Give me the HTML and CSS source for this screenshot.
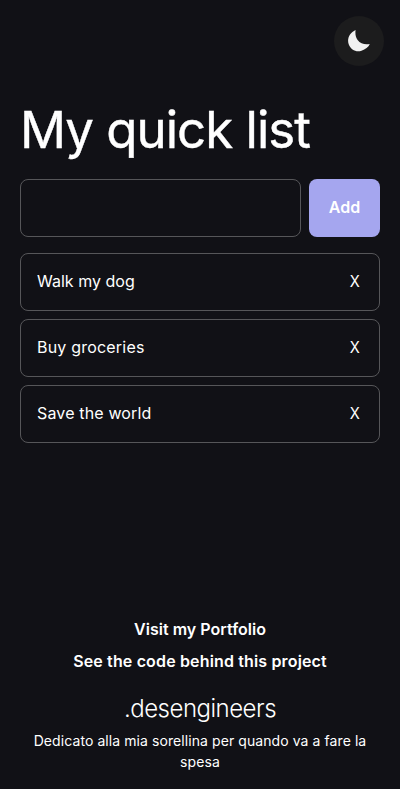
FILE: index.html
```html
<!DOCTYPE html>
<html lang="en">
<head>
<meta charset="utf-8">
<meta name="viewport" content="width=device-width, initial-scale=1">
<title>My quick list</title>
<link rel="stylesheet" href="styles.css">
</head>
<body>
<header class="topbar">
  <button class="theme-toggle" aria-label="Toggle theme">
    <svg class="moon" viewBox="0 0 22 22"><path d="M7.600 0C1.400 2.800-1.300 9.100.8 14.500c2 5.400 7.500 8 12.700 6.200 3.800-1.300 7-3.800 8.300-6.800-4.700 1.100-9.400-.3-12.200-4C7.500 7.100 7.100 3.500 7.600 0z"/></svg>
  </button>
</header>
<main class="content">
  <h1 class="title">My quick list</h1>
  <form class="entry">
    <input class="field" type="text" aria-label="New item">
    <button class="add" type="button">Add</button>
  </form>
  <ul class="list">
    <li class="item"><span class="walk">Walk my dog</span><span class="remove">X</span></li>
    <li class="item"><span class="buy">Buy groceries</span><span class="remove">X</span></li>
    <li class="item"><span class="save">Save the world</span><span class="remove">X</span></li>
  </ul>
</main>
<footer class="footer">
  <a class="link portfolio">Visit my Portfolio</a>
  <a class="link code">See the code behind this project</a>
  <div class="brand">.desengineers</div>
  <p class="dedication">Dedicato alla mia sorellina per quando va a fare la spesa</p>
</footer>
</body>
</html>
```
FILE: styles.css
```css
* { box-sizing: border-box; }
body {
  margin: 0;
  height: 789px;
  display: flex;
  flex-direction: column;
  overflow: hidden;
  background: #111116;
  color: #fff;
  font: 16px/24px Inter, sans-serif;
}
.topbar {
  display: flex;
  justify-content: flex-end;
  padding: 16px 16px 0;
}
.theme-toggle {
  width: 50px;
  height: 50px;
  padding: 0;
  border: 0;
  border-radius: 50%;
  background: #1c1c1d;
  display: grid;
  place-items: center;
}
.moon { width: 22px; height: 22px; fill: #f1f1f1; }
.content { padding: 32px 20px 0; }
.title {
  margin: 0 0 17px;
  font-size: 51px;
  line-height: 64px;
  font-weight: 400;
  letter-spacing: -1px;
  -webkit-text-stroke: 0.4px #fff;
  white-space: nowrap;
}
.entry { display: flex; gap: 8px; margin-bottom: 16px; }
.field {
  flex: 1;
  min-width: 0;
  height: 58px;
  padding: 16px;
  border: 1px solid #565659;
  border-radius: 8px;
  background: transparent;
  color: #fff;
  font: inherit;
}
.add {
  width: 71px;
  height: 58px;
  padding: 0 0 2px;
  border: 0;
  border-radius: 8px;
  background: #a5a6ef;
  color: #fff;
  font: 600 16px/24px Inter, sans-serif;
}
.list {
  margin: 0;
  padding: 0;
  list-style: none;
  display: grid;
  gap: 8px;
}
.item {
  height: 58px;
  padding: 0 19px 2px 16px;
  display: flex;
  align-items: center;
  justify-content: space-between;
  border: 1px solid #565659;
  border-radius: 8px;
}
.walk { letter-spacing: 0.02px; }
.buy { letter-spacing: 0.2px; }
.save { letter-spacing: 0.15px; }
.remove { font-size: 16px; transform: scaleX(0.92); transform-origin: right; }
.footer {
  margin-top: auto;
  padding: 0 20px 17px;
  display: flex;
  flex-direction: column;
  align-items: center;
  text-align: center;
}
.link { font-weight: 600; margin-bottom: 8px; white-space: nowrap; }
.portfolio { letter-spacing: 0.02px; }
.code { letter-spacing: 0.15px; }
.brand {
  margin: 14px 0 7px;
  font: 300 24px/28px Inter, sans-serif;
  letter-spacing: -0.5px;
}
.dedication {
  margin: 0;
  font-size: 14px;
  line-height: 21px;
  letter-spacing: 0.08px;
}
```
